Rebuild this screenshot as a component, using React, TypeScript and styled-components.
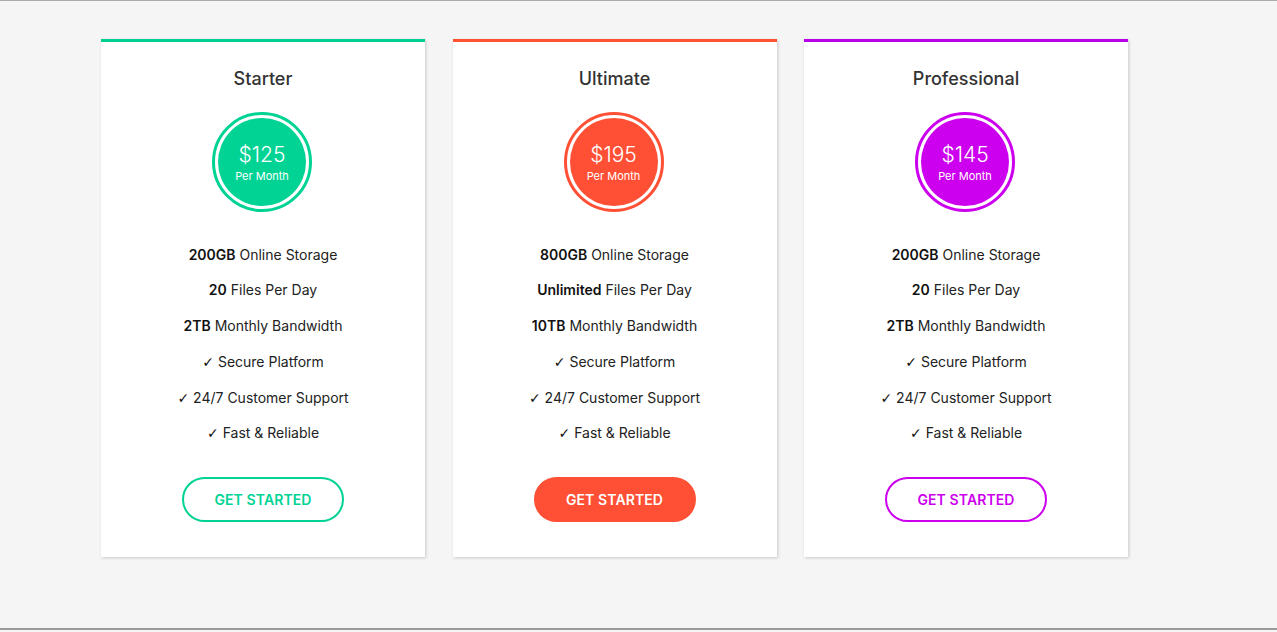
import React from "react";
import styled, { createGlobalStyle } from "styled-components";

const Global = createGlobalStyle`
  html, body { margin: 0; padding: 0; background: #f5f5f5; }
  body { font-family: "Inter", "Open Sans", sans-serif; }
  * { box-sizing: border-box; }
`;

const Page = styled.div`
  height: 630px;
  border-top: 1px solid #aaaaaa;
  border-bottom: 2px solid #9a9a9a;
  background: #f5f5f5;
  padding: 38px 0 0 101px;
`;

const Row = styled.div`
  display: flex;
  gap: 27.5px;
  align-items: flex-start;
`;

const Card = styled.div<{ $c: string }>`
  width: 324px;
  background: #fff;
  border-top: 3px solid ${(p) => p.$c};
  box-shadow: 1px 1px 3px rgba(0, 0, 0, 0.18);
  display: flex;
  flex-direction: column;
  align-items: center;
  padding: 23px 0 35px;
`;

const Title = styled.h3`
  margin: 0;
  font-size: 18px;
  line-height: 27px;
  font-weight: 500;
  color: #333;
`;

const Ring = styled.div<{ $c: string }>`
  margin-top: 19.5px;
  margin-right: 2px;
  width: 100px;
  height: 100px;
  border-radius: 50%;
  border: 3px solid ${(p) => p.$c};
  padding: 3px;
  background: #fff;
`;

const Disc = styled.div<{ $c: string }>`
  width: 100%;
  height: 100%;
  border-radius: 50%;
  background: ${(p) => p.$c};
  color: #fff;
  display: flex;
  flex-direction: column;
  align-items: center;
  justify-content: center;
`;

const Price = styled.div`
  font-size: 21px;
  font-weight: 300;
  line-height: 24px;
  margin-top: 2px;
`;

const Per = styled.div`
  font-size: 11px;
  line-height: 14px;
  font-weight: 400;
  margin-top: 2px;
`;

const List = styled.ul`
  list-style: none;
  margin: 25px 0 0;
  padding: 0;
  text-align: center;
`;

const Item = styled.li`
  font-size: 14px;
  line-height: 35.8px;
  height: 35.8px;
  color: #222;
  b { font-weight: 600; color: #111; }
`;

const Check = styled.span`
  font-family: "DejaVu Sans", sans-serif;
  font-size: 14px;
  line-height: 0;
  font-weight: 700;
  color: #111;
  margin-right: 4px;
`;

const Button = styled.button<{ $c: string; $filled?: boolean }>`
  margin-top: 26px;
  width: 162px;
  height: 45px;
  border-radius: 23px;
  border: 2px solid ${(p) => p.$c};
  background: ${(p) => (p.$filled ? p.$c : "#fff")};
  color: ${(p) => (p.$filled ? "#fff" : p.$c)};
  font-family: inherit;
  font-size: 14px;
  font-weight: 600;
  letter-spacing: 0.1px;
  cursor: pointer;
`;

type Plan = {
  name: string;
  price: string;
  color: string;
  top: string;
  filled?: boolean;
  storage: string;
  files: string;
  bandwidth: string;
};

const plans: Plan[] = [
  { name: "Starter", price: "$125", color: "#00d394", top: "#00cf91", storage: "200GB", files: "20", bandwidth: "2TB" },
  { name: "Ultimate", price: "$195", color: "#ff5035", top: "#ff5133", filled: true, storage: "800GB", files: "Unlimited", bandwidth: "10TB" },
  { name: "Professional", price: "$145", color: "#cc00ee", top: "#b800ea", storage: "200GB", files: "20", bandwidth: "2TB" },
];

export default function App() {
  return (
    <>
      <Global />
      <Page>
        <Row>
          {plans.map((p) => (
            <Card key={p.name} $c={p.top}>
              <Title>{p.name}</Title>
              <Ring $c={p.color}>
                <Disc $c={p.color}>
                  <Price>{p.price}</Price>
                  <Per>Per Month</Per>
                </Disc>
              </Ring>
              <List>
                <Item><b>{p.storage}</b> Online Storage</Item>
                <Item><b>{p.files}</b> Files Per Day</Item>
                <Item><b>{p.bandwidth}</b> Monthly Bandwidth</Item>
                <Item><Check>✓</Check>Secure Platform</Item>
                <Item><Check>✓</Check>24/7 Customer Support</Item>
                <Item><Check>✓</Check>Fast &amp; Reliable</Item>
              </List>
              <Button $c={p.color} $filled={p.filled}>GET STARTED</Button>
            </Card>
          ))}
        </Row>
      </Page>
    </>
  );
}
